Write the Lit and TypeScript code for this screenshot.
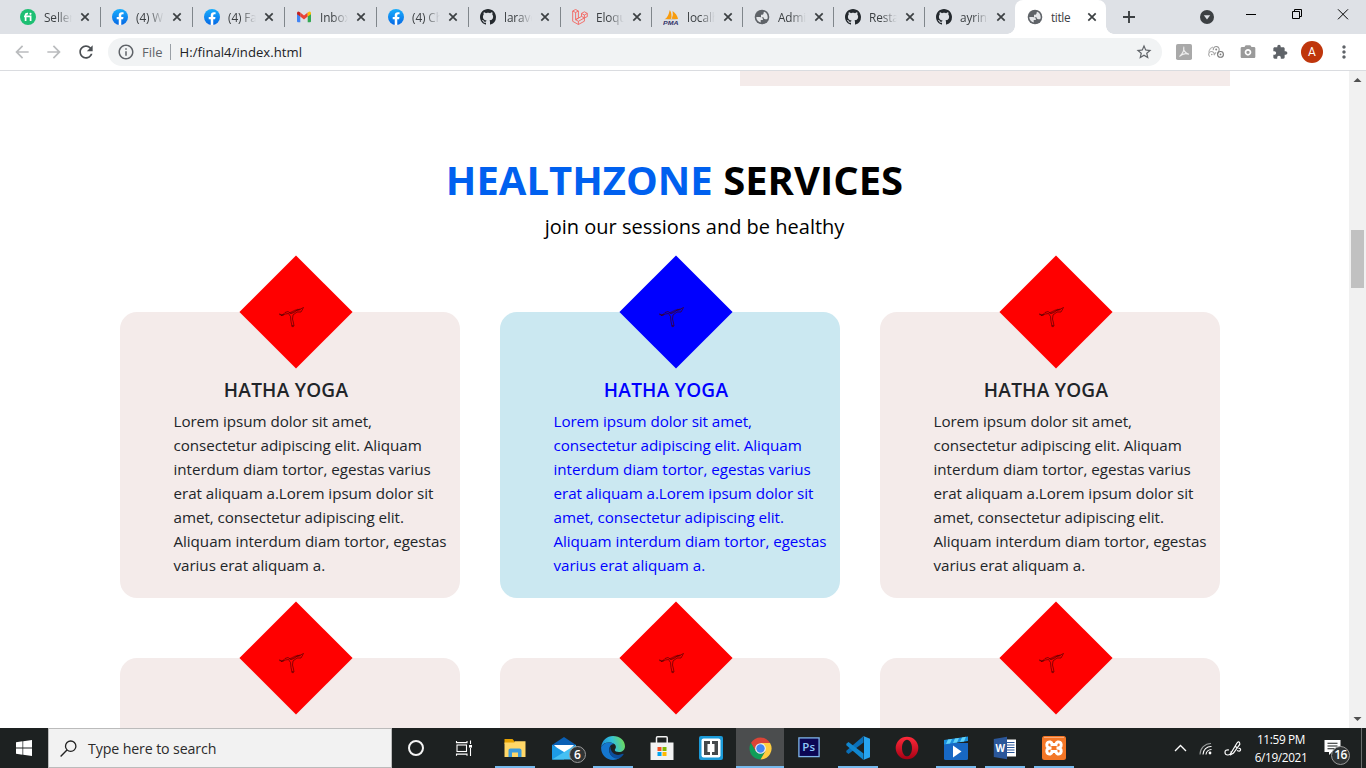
import { LitElement, html, css } from "lit";
import { customElement } from "lit/decorators.js";
import { classMap } from "lit/directives/class-map.js";

/* ---------- favicons ---------- */
const facebook = html`<svg viewBox="0 0 24 24" width="16" height="16">
  <defs><linearGradient id="fb" x1="0" y1="0" x2="0" y2="1"><stop offset="0" stop-color="#19aefd"/><stop offset="1" stop-color="#0668e4"/></linearGradient></defs>
  <circle cx="12" cy="12" r="12" fill="url(#fb)"/>
  <path fill="#fff" d="M16.67 15.47l.53-3.47h-3.33V9.75c0-.95.47-1.87 1.96-1.87h1.51V4.93s-1.37-.24-2.69-.24c-2.74 0-4.53 1.66-4.53 4.67V12H7.08v3.47h3.04v8.38c.61.1 1.24.15 1.88.15s1.27-.05 1.88-.15v-8.38h2.79z"/></svg>`;
const github = html`<svg viewBox="0 0 16 16" width="16" height="16"><path fill="#24292e" d="M8 0C3.58 0 0 3.58 0 8c0 3.54 2.29 6.53 5.47 7.59.4.07.55-.17.55-.38 0-.19-.01-.82-.01-1.49-2.01.37-2.53-.49-2.69-.94-.09-.23-.48-.94-.82-1.13-.28-.15-.68-.52-.01-.53.63-.01 1.08.58 1.23.82.72 1.21 1.87.87 2.33.66.07-.52.28-.87.51-1.07-1.78-.2-3.64-.89-3.64-3.95 0-.87.31-1.59.82-2.15-.08-.2-.36-1.02.08-2.12 0 0 .67-.21 2.2.82.64-.18 1.32-.27 2-.27.68 0 1.36.09 2 .27 1.53-1.04 2.2-.82 2.2-.82.44 1.1.16 1.92.08 2.12.51.56.82 1.27.82 2.15 0 3.07-1.87 3.75-3.65 3.95.29.25.54.73.54 1.48 0 1.07-.01 1.93-.01 2.2 0 .21.15.46.55.38A8.013 8.013 0 0016 8c0-4.42-3.58-8-8-8z"/></svg>`;
const globe = html`<svg viewBox="0 0 16 16" width="16" height="16"><circle cx="8" cy="8" r="7.300" fill="#5f6368"/>
  <path fill="#e4e6e9" d="M2.300 8H5.600c2.300 0 3.600 1 3.300 3.100H6.700v2.500C4.100 13 2.300 10.700 2.300 8zM13.700 8.300c0 .5-.1 1-.3 1.500-.5.4-1.200.6-1.900.5-1.300-.1-1.900-.8-2-2H7V5.700c1.700.2 2.600-.5 2.600-1.800 0-.4.2-.8.500-1.100 2.200.8 3.600 3 3.600 5.500z"/></svg>`;
const fiverr = html`<svg viewBox="0 0 16 16" width="16" height="16"><circle cx="8" cy="8" r="8" fill="#1dbf73"/>
  <path d="M5.600 12V6.200Q5.600 4.600 7.400 4.600H8M4 7.400H10.600V12" fill="none" stroke="#fff" stroke-width="1.700"/><circle cx="10.500" cy="4.800" r="1.100" fill="#fff"/></svg>`;
const gmail = html`<svg viewBox="0 0 16 16" width="16" height="16"><path fill="#4285f4" d="M1 4.500L4.300 7v6.300H2q-1 0-1-1z"/><path fill="#34a853" d="M15 4.500L11.700 7v6.300H14q1 0 1-1z"/>
  <path fill="#ea4335" d="M4.300 3.500L8 6.400l3.700-2.900v4.100L8 10.500 4.300 7.600z"/><path fill="#c5221f" d="M1 4.400q0-2.200 2-1.700l1.300.9v4L1 5.200z"/><path fill="#fbbc04" d="M15 4.400q0-2.200-2-1.700l-1.300.9v4L15 5.200z"/></svg>`;
const laravel = html`<svg viewBox="0 0 16 16" width="16" height="16"><path fill="none" stroke="#f4645f" stroke-width=".9" stroke-linejoin="round" d="M.7 2L3.600.5 6.400 2v7L3.600 10.700M.7 2v10.300l5.700 3.200 6-3.300V8.900M.7 2l2.900 1.500L6.400 2M3.600 3.500v7.200l2.800 1.600 6-3.400M6.400 12.300v3.200M9.500 4.400l2.900-1.600 2.900 1.600v3.200l-2.900 1.300-2.900-1.500zM9.500 4.400L12.400 6l2.900-1.600M12.400 6v2.900M3.600 10.700l5.900-3.300"/></svg>`;
const pma = html`<svg viewBox="0 0 16 16" width="16" height="16"><path fill="#f89c0e" d="M1.500 10.300Q5 9 6.800 1Q9.500 5 8 10zM8.700 10Q10.500 6 9.600 2Q14 5 15 10z"/><path fill="#c9c3b8" d="M3 10.800q5-2 12 0z"/>
  <text x="0" y="15.500" font-family="Liberation Sans" font-size="5.800" font-weight="700" font-style="italic" textLength="15.500" lengthAdjust="spacingAndGlyphs" fill="#343468">PMA</text></svg>`;

const closeX = html`<svg viewBox="0 0 10 10" width="10" height="10"><path d="M1.300 1.300L8.700 8.700M8.700 1.300L1.300 8.700" stroke="#3c4043" stroke-width="1.700"/></svg>`;

/* ---------- toolbar icons ---------- */
const mat = (d: string, fill: string, size: number) =>
  html`<svg viewBox="0 0 24 24" width=${size} height=${size}><path fill=${fill} d=${d}/></svg>`;
const BACK = "M20 11H7.83l5.59-5.590L12 4l-8 8 8 8 1.410-1.410L7.830 13H20v-2z";
const FORWARD = "M12 4l-1.410 1.410L16.170 11H4v2h12.170l-5.580 5.590L12 20l8-8z";
const RELOAD = "M17.65 6.35C16.2 4.9 14.21 4 12 4c-4.42 0-7.99 3.58-7.99 8s3.57 8 7.99 8c3.73 0 6.84-2.55 7.73-6h-2.08c-.82 2.33-3.04 4-5.65 4-3.31 0-6-2.69-6-6s2.69-6 6-6c1.66 0 3.14.69 4.22 1.78L13 11h7V4l-2.35 2.35z";
const INFO = "M11 7h2v2h-2zm0 4h2v6h-2zm1-9C6.48 2 2 6.48 2 12s4.48 10 10 10 10-4.48 10-10S17.52 2 12 2zm0 18c-4.41 0-8-3.59-8-8s3.59-8 8-8 8 3.59 8 8-3.59 8-8 8z";
const STAR = "M22 9.24l-7.19-.62L12 2 9.19 8.63 2 9.24l5.46 4.73L5.82 21 12 17.27 18.18 21l-1.63-7.03L22 9.24zM12 15.4l-3.76 2.27 1-4.28-3.32-2.88 4.38-.38L12 6.1l1.71 4.04 4.38.38-3.32 2.88 1 4.28L12 15.4z";
const PUZZLE = "M20.5 11H19V7c0-1.1-.9-2-2-2h-4V3.5C13 2.12 11.88 1 10.5 1S8 2.12 8 3.5V5H4c-1.1 0-1.99.9-1.99 2v3.8H3.5c1.49 0 2.7 1.21 2.7 2.7s-1.21 2.7-2.7 2.7H2V20c0 1.1.9 2 2 2h3.8v-1.5c0-1.49 1.21-2.7 2.7-2.7 1.49 0 2.7 1.21 2.7 2.7V22H17c1.1 0 2-.9 2-2v-4h1.5c1.38 0 2.5-1.12 2.5-2.500S21.880 11 20.500 11z";
const CAMERA = "M8.500 2L6.670 4.500H3c-1.100 0-2 .9-2 2V19c0 1.100.9 2 2 2h18c1.100 0 2-.9 2-2V6.500c0-1.100-.9-2-2-2h-3.670L15.500 2h-7zm3.500 15.500c-2.760 0-5-2.240-5-5s2.240-5 5-5 5 2.240 5 5-2.240 5-5 5zM12 10a2.500 2.500 0 1 0 0 5 2.500 2.500 0 1 0 0-5z";
const DOTS = "M12 8c1.100 0 2-.9 2-2s-.9-2-2-2-2 .9-2 2 .9 2 2 2zm0 2c-1.100 0-2 .9-2 2s.9 2 2 2 2-.9 2-2-.9-2-2-2zm0 6c-1.100 0-2 .9-2 2s.9 2 2 2 2-.9 2-2-.9-2-2-2z";

const pdf = html`<svg viewBox="0 0 16 16" width="16" height="16"><rect width="16" height="16" rx="1.800" fill="#a9a9a9"/><path d="M3.500 12.400C6 11 8.500 6 7.800 3.500C7 5 8.500 9.500 13 10.200C9.500 9 6 10 3.500 12.400z" fill="none" stroke="#eee" stroke-width="1.100"/></svg>`;
const rings = html`<svg viewBox="0 0 16 16" width="16" height="16" fill="none" stroke-width="1.100"><path d="M.8 8.500A6.500 6.500 0 0 1 5 3" stroke="#b5b5b5"/><path d="M5.300 6.200A3 3 0 1 1 10.500 7.500L9.300 10" stroke="#999"/><circle cx="8.200" cy="5.400" r="1" fill="#888"/><path d="M2 12.600A2.700 2.700 0 1 1 6 11.200L8 8.300" stroke="#aaa"/><circle cx="3.800" cy="10.500" r=".8" fill="#999"/><circle cx="12.500" cy="10.400" r="2.900" stroke="#777"/><circle cx="12.500" cy="10.400" r=".9" fill="#777"/></svg>`;

/* ---------- taskbar icons ---------- */
const cortana = html`<svg viewBox="0 0 18 18" width="18" height="18"><circle cx="9" cy="9" r="7" fill="none" stroke="#f4f4f4" stroke-width="2"/></svg>`;
const taskView = html`<svg viewBox="0 0 18 18" width="18" height="18" fill="none" stroke="#fff" stroke-width="1.100"><rect x="2" y="6" width="9.500" height="6.500"/><path d="M1.500 2v1.600h10.500V2M1.500 16.700v-1.600h10.500v1.600M15.500 1.500v3.500M15.500 9v8"/><rect x="14" y="6" width="3" height="2.600" fill="#fff" stroke="none"/></svg>`;
const explorer = html`<svg viewBox="0 0 24 24" width="24" height="24"><path fill="#e6a100" d="M1.500 3h8l2 2.500V8h-10z"/><path fill="#ffd767" d="M1.500 6.500H11l1-1.200h10.500V21H1.500z"/><path fill="#3c9bdc" d="M5.500 14.500q0-2 2-2h9q2 0 2 2V21h-3.500v-4.500H9V21H5.500z"/></svg>`;
const mail = html`<svg viewBox="0 0 24 24" width="24" height="24"><path fill="#0a5fb4" d="M0 9L12 1l12 8v3H0z"/><path fill="#fff" d="M2 9h20l-7 8H9z"/><path fill="#1d9be6" d="M0 8.700l12 7.300v7.500H0z"/><path fill="#45c0f3" d="M24 8.700L0 23.500h24z"/></svg>`;
const edge = html`<svg viewBox="0 0 24 24" width="24" height="24"><defs><linearGradient id="eg" x1="0" y1=".6" x2="1" y2=".4"><stop offset="0" stop-color="#1b8fdb"/><stop offset=".5" stop-color="#34c1d8"/><stop offset="1" stop-color="#6fdc58"/></linearGradient></defs>
  <path fill="url(#eg)" d="M.2 10.800C1 4.500 6 0 12 0c7 0 12 4.800 12 10.200 0 3.700-2.800 5.800-6 5.800-2.600 0-4.200-.9-4.200-2 0-.8 1.100-1.200 1.100-3C14.900 8 11.800 6.500 8 6.500c-3.700 0-6.300 1.500-7.800 4.300z"/>
  <path fill="#1577cf" d="M.2 10.800C2 8 4.800 6.500 8 6.500c2.200 0 4 .7 5 1.600C9.800 8.200 8.200 11 8.200 14c0 5 4.300 8.800 10.200 8C16.500 23.300 14.400 24 12 24 4.800 24-.7 18 .2 10.800z"/>
  <path fill="#0c4e9c" d="M9.300 10.500C6.500 16 10 22.700 17 22.700c2-.5 4-2 5.500-4.200.3-.6-.2-.9-.7-.7-6 2.700-11.800.4-12.500-7.300z"/></svg>`;
const store = html`<svg viewBox="0 0 24 24" width="24" height="24"><path d="M6.500 7V1.800q0-1 1-1h8.700q1 0 1 1V7" fill="none" stroke="#f2f2f2" stroke-width="1.500"/><path fill="#f2f2f2" d="M.5 6.500h23V24H.5z"/>
  <path fill="#f25022" d="M7.500 11h4v4h-4z"/><path fill="#7fba00" d="M12.500 11h4v4h-4z"/><path fill="#00a4ef" d="M7.500 16h4v4h-4z"/><path fill="#ffb900" d="M12.500 16h4v4h-4z"/></svg>`;
const brackets = html`<svg viewBox="0 0 24 24" width="24" height="24"><rect width="24" height="24" rx="2" fill="#1b9ad8"/><rect x="2.500" y="2.500" width="19" height="19" rx="2" fill="#fff"/><path fill="#45494b" d="M5 5h6v3H8.500v8H11v3H5zM19 5h-6v3h2.500v8H13v3h6z"/></svg>`;
const chrome = html`<svg viewBox="0 0 24 24" width="23" height="23"><path fill="#db4437" d="M2.050 6.250A11.500 11.500 0 0 1 21.960 6.250L12 6.250 7 15z"/><path fill="#0f9d58" d="M2.050 6.250L7.020 14.870 12 17.500 17 14.800 12 23.500A11.500 11.500 0 0 1 2.050 6.250z"/><path fill="#ffcd40" d="M12 6.250h9.960A11.500 11.500 0 0 1 12 23.500L17 14.870z"/><circle cx="12" cy="12" r="5.600" fill="#f1f1f1"/><circle cx="12" cy="12" r="4.400" fill="#4285f4"/></svg>`;
const photoshop = html`<svg viewBox="0 0 22 22" width="22" height="22"><rect x=".9" y="1.900" width="20.200" height="18.700" fill="#0c0754" stroke="#7fb5ea" stroke-width="1.300"/><text x="4.200" y="15.300" font-family="Open Sans" font-weight="600" font-size="11.500" textLength="13" fill="#8fc7fa">Ps</text></svg>`;
const vscode = html`<svg viewBox="0 0 24 24" width="24" height="24"><path fill="#0a6fb8" d="M17.500 6.500L2.500 18 .3 16.200v-1.400L17.500 0z"/><path fill="#1187cf" d="M17.500 17.500L2.500 6 .3 7.800v1.400L17.500 24z"/><path fill="#27a4f0" d="M17.300 0L24 2.700v18.600L17.300 24q.7-.4.700-1.500v-21Q18 .5 17.300 0z"/></svg>`;
const opera = html`<svg viewBox="0 0 24 24" width="24" height="24"><defs><linearGradient id="og" x1="0" y1="0" x2="0" y2="1"><stop offset="0" stop-color="#ff2a3a"/><stop offset="1" stop-color="#a70014"/></linearGradient></defs><path fill-rule="evenodd" fill="url(#og)" d="M12 .7a11.300 11.300 0 1 0 0 22.600A11.300 11.300 0 1 0 12 .7zM12 3.700c2.900 0 5 3.700 5 8.300s-2.100 8.300-5 8.300S7 16.600 7 12s2.100-8.300 5-8.300z"/></svg>`;
const movies = html`<svg viewBox="0 0 24 24" width="24" height="24"><path fill="#1768c4" d="M0 7h24v15.500q0 1.500-1.500 1.500h-21Q0 24 0 22.500z"/><path fill="#1b91e0" d="M0 4l24-3.500V5L0 8.500z"/><path fill="#62d3f8" d="M4 3.500l4-.6-2 4.700-4 .5zM11 2.500l4-.6-2 4.700-4 .5zM18 1.400l4-.6-2 4.700-4 .5z"/><path fill="#fff" d="M9 9.500l8.500 6-8.500 6z"/></svg>`;
const word = html`<svg viewBox="0 0 24 24" width="24" height="24"><path fill="#fff" d="M12 3.500h11v17H12z"/><path d="M14 6.500h7.500M14 9h7.500M14 11.500h7.500M14 14h7.500M14 16.500h7.500" stroke="#2b579a" stroke-width="1"/><path fill="#2b579a" d="M.8 3L14 .8v22.400L.8 21z"/><text x="2.500" y="16" font-family="Open Sans" font-weight="700" font-size="10" textLength="9.500" lengthAdjust="spacingAndGlyphs" fill="#fff">W</text></svg>`;
const xampp = html`<svg viewBox="0 0 24 24" width="24" height="24"><rect width="24" height="24" rx="2.500" fill="#f37626"/><path d="M2 1.500h20" stroke="#f9a978" stroke-width="1"/><path fill="none" stroke="#fff" stroke-width="3" d="M9.500 12Q4.500 12 4.800 8.700Q5.200 5.500 8.300 6Q9.800 6.500 10 8.500H14Q14.200 6.500 15.700 6Q18.800 5.500 19.200 8.700Q19.500 12 14.500 12Q19.500 12 19.200 15.300Q18.800 18.500 15.700 18Q14.200 17.500 14 15.500H10Q9.800 17.500 8.300 18Q5.200 18.500 4.800 15.300Q4.500 12 9.500 12z"/></svg>`;

const tabs = [
  { icon: fiverr, label: "Seller" }, { icon: facebook, label: "(4) Wa" }, { icon: facebook, label: "(4) Fac" },
  { icon: gmail, label: "Inbox (" }, { icon: facebook, label: "(4) Cha" }, { icon: github, label: "laravel" },
  { icon: laravel, label: "Eloque" }, { icon: pma, label: "localho" }, { icon: globe, label: "Admin" },
  { icon: github, label: "Restau" }, { icon: github, label: "ayrin-s" }, { icon: globe, label: "title" },
];

const apps = [
  { icon: explorer, open: true }, { icon: mail, badge: "6" }, { icon: edge, open: true }, { icon: store },
  { icon: brackets }, { icon: chrome, open: true, active: true }, { icon: photoshop, raised: true }, { icon: vscode, open: true },
  { icon: opera }, { icon: movies, open: true }, { icon: word, open: true }, { icon: xampp, open: true },
] as { icon: unknown; open?: boolean; active?: boolean; badge?: string; raised?: boolean }[];

@customElement("service-card")
class ServiceCard extends LitElement {
  static properties = { highlighted: { type: Boolean, reflect: true } };
  declare highlighted: boolean;
  static styles = css`
    :host { display: block; box-sizing: border-box; width: 340px; height: 286px; border-radius: 17px; background: #f4ebea; color: #212529; }
    :host([highlighted]) { background: #cbe8f1; color: #0000ff; }
    .gem { width: 80px; height: 80px; margin: -40px 0 0 136px; background: #ff0000; transform: rotate(45deg); }
    :host([highlighted]) .gem { background: #0000ff; }
    .pose { display: block; transform: rotate(-45deg); width: 80px; height: 80px; }
    .title { margin: 25px 0 0; width: 332px; text-align: center; font: 600 19px/26px "Open Sans", sans-serif; letter-spacing: 0.250px; }
    .copy { margin: 6px 0 0 53.500px; white-space: nowrap; font: 400 15.200px/24px "Open Sans", sans-serif; letter-spacing: -0.050px; }
  `;
  render() {
    return html`
      <div class="gem"><svg class="pose" viewBox="0 0 80 80" fill="none" stroke="#400" stroke-linecap="round">
        <path stroke-width=".9" opacity=".7" d="M23.500 42l2.500 1.500 3-3 3-1 3 2 3-1 3-2.500 3.500-1 3-1.500M25.500 43.500l4-1.500 3-.5 2 3 .5 5 1 4.500h2l-.5-3-1-4 .5-4 4-3 4 0 2-3.500"/>
        <path stroke-width="1.600" opacity=".45" d="M34 41l5-2.500 3-1M24 42.500l3 .5M36 54l1 .5M41 38.500l3-1"/>
      </svg></div>
      <h3 class="title">HATHA YOGA</h3>
      <p class="copy">Lorem ipsum dolor sit amet,<br>consectetur adipiscing elit. Aliquam<br>interdum diam tortor, egestas varius<br>erat aliquam a.Lorem ipsum dolor sit<br>amet, consectetur adipiscing elit.<br>Aliquam interdum diam tortor, egestas<br>varius erat aliquam a.</p>`;
  }
}

@customElement("app-root")
class AppRoot extends LitElement {
  static styles = css`
    :host { display: flex; flex-direction: column; width: 1366px; height: 768px; overflow: hidden; background: #fff; font-family: "Open Sans", sans-serif; color: #202124; }
    svg { display: block; flex: none; }
    .strip { display: flex; flex: none; height: 34px; background: #dee1e6; padding-left: 8px; }
    .tab { box-sizing: border-box; width: 92px; height: 34px; display: flex; align-items: center; padding-left: 12px; position: relative; flex: none; }
    .tab.tight { width: 91px; }
    .tab.divided::before { content: ""; position: absolute; left: 0; top: 7px; width: 1px; height: 20px; background: #80868b; }
    .tab.active { background: #fff; border-radius: 8px 8px 0 0; }
    .tab.active::before, .tab.active::after { content: ""; position: absolute; bottom: 0; width: 8px; height: 8px; }
    .tab.active::before { left: -8px; background: radial-gradient(circle at 0 0, transparent 7.500px, #fff 8px); }
    .tab.active::after { right: -8px; background: radial-gradient(circle at 100% 0, transparent 7.500px, #fff 8px); }
    .label { width: 28px; margin-left: 8px; margin-right: 8px; overflow: hidden; white-space: nowrap; font-size: 11.800px; line-height: 16px; color: #3c4043; letter-spacing: -0.100px; -webkit-mask-image: linear-gradient(90deg, #000 45%, transparent 100%); }
    .tab.active .label { -webkit-mask-image: none; letter-spacing: -0.350px; }
    .plus { margin: 10px 0 0 16px; width: 14px; }
    .drop { margin: 10px 0 0 64px; }
    .toolbar { display: flex; flex: none; align-items: center; height: 36px; background: #fff; border-bottom: 1px solid #dadce0; }
    .nav { display: flex; gap: 12px; padding-left: 12px; width: 108px; box-sizing: border-box; flex: none; }
    .omni { display: flex; flex: none; align-items: center; box-sizing: border-box; width: 1054px; height: 28px; border-radius: 14px; background: #f1f3f4; padding: 0 9px; white-space: nowrap; }
    .scheme { margin-left: 7px; color: #5f6368; font-size: 13px; }
    .bar { width: 1px; height: 16px; margin: 0 9px 0 7px; background: #9aa0a6; }
    .url { flex: 1; font-size: 13.100px; letter-spacing: 0.040px; }
    .ext { display: flex; align-items: center; margin-left: 14px; flex: none; }
    .ext > * { margin-right: 16px; }
    .ext .avatar { width: 22px; height: 22px; border-radius: 50%; background: #bf360c; color: #fff; font: 400 12px/22px Roboto, sans-serif; text-align: center; margin-right: 11px; margin-left: -3px; }
    .view { display: flex; flex: 1; min-height: 0; overflow: hidden; }
    .page { width: 1349px; height: 657px; overflow: hidden; }
    .prior { width: 490px; height: 15px; margin-left: 740px; background: #f4ebea; }
    .heading { margin: 66px 0 0; height: 55px; text-align: center; font: 700 40px/55px "Open Sans", sans-serif; color: #000; }
    .brand { color: #0060ef; }
    .tagline { margin: 6px 0 0 39px; width: 1311px; text-align: center; font: 400 20px/28px "Open Sans", sans-serif; color: #000; }
    .grid { display: grid; grid-template-columns: repeat(3, 340px); gap: 60px 40px; margin: 71px 0 0 120px; }
    .scroll { width: 17px; height: 657px; background: #f1f1f1; display: flex; flex-direction: column; align-items: center; }
    .thumb { width: 13px; height: 58px; margin-top: 142px; background: #c1c1c1; }
    .arrow { width: 17px; height: 17px; }
    .rest { flex: 1; }
    .taskbar { display: flex; flex: none; height: 40px; background: #1d2121; color: #fff; }
    .start { width: 48px; display: grid; place-items: center; }
    .search { box-sizing: border-box; width: 344px; height: 40px; display: flex; align-items: center; background: #f2f2f2; border: 1px solid #bbb; color: #2b2b2b; font-size: 14.200px; padding-left: 11px; gap: 11px; letter-spacing: -0.120px; }
    .slot { display: grid; place-items: center; width: 48px; height: 40px; }
    .slot.wide { width: 47px; margin-right: 4px; }
    .app { position: relative; width: 48px; height: 40px; margin-right: 1px; display: grid; place-items: center; flex: none; }
    .app.active { background: #4b4d4e; }
    .app.raised { padding-bottom: 3px; box-sizing: border-box; }
    .app.open::after { content: ""; position: absolute; left: 4px; right: 4px; bottom: 0; height: 2px; background: #76b9ed; }
    .app.active::after { left: 0; right: 0; }
    .badge { position: absolute; left: 29px; top: 18px; width: 15px; height: 15px; border: 1px solid #999; border-radius: 50%; background: #303435; font: 600 12px/15px "Open Sans", sans-serif; text-align: center; }
    .tray { display: flex; margin-left: auto; align-items: center; }
    .clock { width: 74px; text-align: center; font-size: 11.800px; line-height: 18px; letter-spacing: -0.350px; padding-bottom: 1px; white-space: nowrap; margin-left: -4px; }
    .notes { position: relative; width: 44px; height: 40px; margin-left: -1px; }
    .notes > svg { margin: 11px 0 0 7px; }
    .notes .badge { left: 14px; top: 18px; width: 17px; height: 17px; line-height: 16px; letter-spacing: -0.600px; }
    .peek { width: 4px; height: 40px; border-left: 1px solid #6a6d6d; }
  `;

  render() {
    return html`
      <div class="strip">
        ${tabs.map((t, i) => html`<div class=${classMap({ tab: true, tight: i > 5, divided: i > 0 && i < 11, active: i === 11 })}>${t.icon}<span class="label">${t.label}</span>${closeX}</div>`)}
        <svg class="plus" viewBox="0 0 14 14" width="14" height="14"><path d="M7 1v12M1 7h12" stroke="#3c4043" stroke-width="1.900"/></svg>
        <svg class="drop" viewBox="0 0 14 14" width="14" height="14"><circle cx="7" cy="7" r="7" fill="#3c4043"/><path d="M3.800 5.200h6.400L7 9.500z" fill="#dee1e6"/></svg>
        <svg viewBox="0 0 152 34" width="152" height="34" fill="none" stroke="#000" stroke-width="1"><path d="M32 14.500h10"/><path d="M78.500 11.500h7v7h-7zM80.500 11.500v-2h7v7h-2"/><path d="M124 9.300l10 10M134 9.300l-10 10"/></svg>
      </div>
      <div class="toolbar">
        <div class="nav">${mat(BACK, "#babcbe", 20)}${mat(FORWARD, "#babcbe", 20)}${mat(RELOAD, "#4b4f53", 20)}</div>
        <div class="omni">${mat(INFO, "#5f6368", 18)}<span class="scheme">File</span><span class="bar"></span><span class="url">H:/final4/index.html</span>${mat(STAR, "#5f6368", 18)}</div>
        <div class="ext">${pdf}${rings}${mat(CAMERA, "#9a9a9a", 16)}${mat(PUZZLE, "#5f6368", 16)}<div class="avatar">A</div>${mat(DOTS, "#5f6368", 20)}</div>
      </div>
      <div class="view">
        <div class="page">
          <div class="prior"></div>
          <h2 class="heading"><span class="brand">HEALTHZONE</span> SERVICES</h2>
          <p class="tagline">join our sessions and be healthy</p>
          <div class="grid">
            ${[0, 1, 2, 3, 4, 5].map((i) => html`<service-card ?highlighted=${i === 1}></service-card>`)}
          </div>
        </div>
        <div class="scroll">
          <svg class="arrow" viewBox="0 0 17 17"><path d="M4.500 11h8L8.500 7z" fill="#505050"/></svg>
          <div class="thumb"></div>
          <div class="rest"></div>
          <svg class="arrow" viewBox="0 0 17 17"><path d="M4.500 6h8L8.500 10z" fill="#505050"/></svg>
        </div>
      </div>
      <div class="taskbar">
        <div class="start"><svg viewBox="0 0 16 16" width="16" height="16"><path fill="#fff" d="M0 2.200l6.500-.9v6.300H0zM7.200 1.200L16 0v7.600H7.200zM0 8.400h6.500v6.300L0 13.800zM7.200 8.400H16V16l-8.800-1.200z"/></svg></div>
        <div class="search"><svg viewBox="0 0 17 17" width="17" height="17"><circle cx="10.700" cy="6.200" r="5.200" fill="none" stroke="#222" stroke-width="1.300"/><path d="M7 10L.6 16.400" stroke="#222" stroke-width="1.400"/></svg><span class="hint">Type here to search</span></div>
        <div class="slot">${cortana}</div>
        <div class="slot wide">${taskView}</div>
        ${apps.map((a) => html`<div class=${classMap({ app: true, open: !!a.open, active: !!a.active, raised: !!a.raised })}>${a.icon}${a.badge ? html`<span class="badge">${a.badge}</span>` : ""}</div>`)}
        <div class="tray">
          <svg viewBox="0 0 76 20" width="76" height="20" fill="none" stroke="#fff">
            <path d="M3 13l5.500-5.500L14 13" stroke-width="1.300"/>
            <g stroke-width="1.100"><path d="M28 16.500A11 11 0 0 1 39 5.500" stroke="#9a9d9d"/><path d="M31 16.500A8 8 0 0 1 39.500 8.500M34 16.500A5.500 5.500 0 0 1 39.500 11.500"/><circle cx="38" cy="15" r="1.400" fill="#fff" stroke="none"/></g>
            <path stroke-width="1.200" d="M57 12q-4-.5-4 2.300t3 2.700q2 0 3-2l6-10q1.500-2 2.500-.5t-.5 3l-5.500 7.500-2.700 1.700.4-3.500M63.500 8.500l2 1.500M65 12.500q3 1.500 3.500-.5t-2-1.500"/>
          </svg>
          <div class="clock">11:59 PM<br>6/19/2021</div>
          <div class="notes"><svg viewBox="0 0 17 17" width="17" height="17"><path fill="#fff" d="M.5 1h16v12H8l-3 3v-3H.5z"/><path d="M3.500 4.300h10M3.500 7h10M3.500 9.700h7" stroke="#1d2121" stroke-width="1.100"/></svg><span class="badge">16</span></div>
          <div class="peek"></div>
        </div>
      </div>`;
  }
}
